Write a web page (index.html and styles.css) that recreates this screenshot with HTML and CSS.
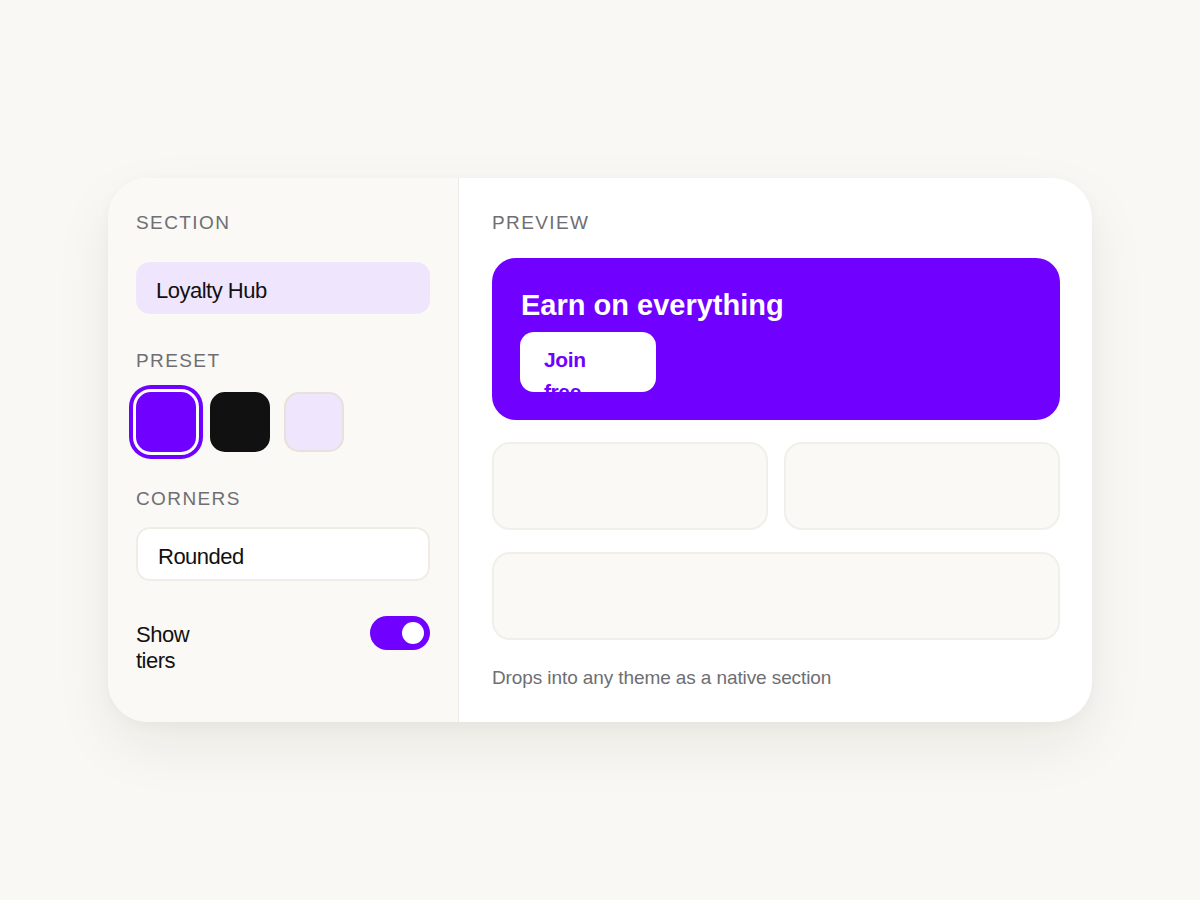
FILE: index.html
```html
<!DOCTYPE html>
<html lang="en">
<head>
<meta charset="utf-8">
<title>Section editor</title>
<link rel="stylesheet" href="styles.css">
</head>
<body>
<main class="stage">
  <div class="card">
    <aside class="panel">
      <div class="label label-section">SECTION</div>
      <div class="field field-name">Loyalty Hub</div>
      <div class="label label-preset">PRESET</div>
      <div class="swatches">
        <span class="swatch swatch-purple is-selected"></span>
        <span class="swatch swatch-black"></span>
        <span class="swatch swatch-lavender"></span>
      </div>
      <div class="label label-corners">CORNERS</div>
      <div class="field field-corners">Rounded</div>
      <div class="toggle-row">
        <span class="toggle-label">Show tiers</span>
        <span class="toggle"><span class="knob"></span></span>
      </div>
    </aside>
    <section class="preview">
      <div class="label">PREVIEW</div>
      <div class="hero">
        <div class="hero-title">Earn on everything</div>
        <div class="hero-btn">Join free</div>
      </div>
      <div class="tiles">
        <div class="tile"></div>
        <div class="tile"></div>
        <div class="tile tile-wide"></div>
      </div>
      <p class="caption">Drops into any theme as a native section</p>
    </section>
  </div>
</main>
</body>
</html>
```
FILE: styles.css
```css
* { box-sizing: border-box; }
html, body { margin: 0; padding: 0; }
body {
  background: #f9f8f4;
  font-family: "Liberation Sans", Arial, Helvetica, sans-serif;
  color: #111;
  width: 1200px;
  height: 900px;
  overflow: hidden;
}
.stage {
  padding: 178px 108px 0 108px;
}
.card {
  display: flex;
  width: 984px;
  height: 544px;
  background: #fff;
  border-radius: 40px;
  overflow: hidden;
  box-shadow: 0 24px 60px rgba(40, 30, 10, 0.07), 0 4px 14px rgba(40, 30, 10, 0.03);
}
.panel {
  width: 351px;
  flex: none;
  background: #faf9f5;
  border-right: 1px solid #efece5;
  padding: 33px 28px 0 28px;
  display: flex;
  flex-direction: column;
}
.label {
  font-size: 19px;
  line-height: 24px;
  letter-spacing: 1.4px;
  color: #6e6e73;
}
.field {
  height: 52px;
  border-radius: 14px;
  font-size: 22px;
  letter-spacing: -0.5px;
  display: flex;
  align-items: center;
  padding: 5px 20px 0 20px;
}
.field-name {
  margin-top: 27px;
  background: #efe6fd;
}
.label-preset { margin-top: 35px; }
.swatches {
  margin-top: 19px;
  display: flex;
  gap: 14px;
}
.swatch {
  width: 60px;
  height: 60px;
  border-radius: 15px;
  display: block;
}
.swatch-purple { background: #7000ff; }
.swatch-purple.is-selected {
  box-shadow: 0 0 0 3px #ffffff, 0 0 0 7px #7000ff;
}
.swatch-black { background: #111111; }
.swatch-lavender { background: #efe6fd; border: 2px solid #e6e1db; }
.label-corners { margin-top: 35px; }
.field-corners {
  margin-top: 16px;
  height: 54px;
  background: #fff;
  border: 2px solid #f0ede7;
  padding-top: 5px;
}
.toggle-row {
  margin-top: 35px;
  display: flex;
  justify-content: space-between;
  align-items: flex-start;
}
.toggle-label {
  font-size: 22px;
  line-height: 26px;
  letter-spacing: -0.5px;
  padding-top: 6px;
  max-width: 80px;
}
.toggle {
  width: 60px;
  height: 34px;
  border-radius: 17px;
  background: #7000ff;
  display: flex;
  align-items: center;
  justify-content: flex-end;
  padding-right: 6px;
}
.knob {
  width: 22px;
  height: 22px;
  border-radius: 50%;
  background: #fff;
  display: block;
}
.preview {
  flex: 1;
  padding: 33px 32px 0 33px;
  display: flex;
  flex-direction: column;
}
.hero {
  margin-top: 23px;
  height: 162px;
  background: #7000ff;
  border-radius: 24px;
  padding: 30px 28px 0 28px;
}
.hero-title {
  color: #fff;
  font-weight: 700;
  font-size: 29px;
  line-height: 34px;
  letter-spacing: 0;
  padding-left: 1px;
}
.hero-btn {
  margin-top: 10px;
  width: 136px;
  height: 60px;
  background: #fff;
  border-radius: 14px;
  overflow: hidden;
  color: #7000ff;
  font-weight: 700;
  font-size: 21px;
  line-height: 32px;
  letter-spacing: -0.4px;
  padding: 12px 40px 0 24px;
}
.tiles {
  margin-top: 22px;
  display: grid;
  grid-template-columns: 1fr 1fr;
  column-gap: 16px;
  row-gap: 22px;
}
.tile {
  height: 88px;
  border-radius: 18px;
  background: #faf9f5;
  border: 2px solid #f1efe9;
}
.tile-wide { grid-column: 1 / span 2; }
.caption {
  margin: 26px 0 0 0;
  font-size: 19px;
  line-height: 24px;
  letter-spacing: -0.1px;
  color: #6e6e73;
}
```
